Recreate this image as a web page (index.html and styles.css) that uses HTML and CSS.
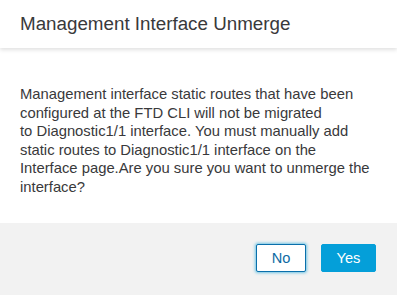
FILE: index.html
```html
<!DOCTYPE html>
<html lang="en">
<head>
    <meta charset="UTF-8">
    <title>Management Interface Unmerge</title>
    <link rel="stylesheet" href="styles.css">
</head>
<body>
    <div class="modal">
        <div class="modal-header">
            <h2 class="modal-title">Management Interface Unmerge</h2>
        </div>
        <div class="modal-body">
            <p>Management interface static routes that have been configured at the FTD CLI will not be migrated to&nbsp;Diagnostic1/1 interface. You must manually add static routes to Diagnostic1/1 interface on the Interface page.Are you sure you want to unmerge the interface?</p>
        </div>
        <div class="modal-footer">
            <button class="btn btn-secondary">No</button>
            <button class="btn btn-primary">Yes</button>
        </div>
    </div>
</body>
</html>
```

FILE: styles.css
```css
body {
    margin: 0;
    font-family: 'Liberation Sans', Arial, sans-serif;
    background-color: #fff;
}

.modal {
    width: 397px;
    height: 295px;
    display: flex;
    flex-direction: column;
}

.modal-header {
    height: 48px;
    padding: 0 20px;
    display: flex;
    align-items: center;
    box-shadow: 0 2px 4px rgba(0, 0, 0, 0.12);
    position: relative;
}

.modal-title {
    margin: 0;
    font-size: 18.8px;
    font-weight: normal;
    color: #39393b;
}

.modal-body {
    flex: 1;
    padding: 37px 22px 0 20px;
}

.modal-body p {
    margin: 0;
    font-size: 14.8px;
    line-height: 18.6px;
    color: #39393b;
}

.modal-footer {
    height: 72px;
    background-color: #f2f2f2;
    display: flex;
    justify-content: flex-end;
    align-items: flex-start;
    gap: 15px;
    padding: 21px 21px 0 0;
    box-sizing: border-box;
}

.btn {
    height: 28px;
    font-family: inherit;
    font-size: 14.6px;
    border-radius: 2px;
    padding: 0;
}

.btn-secondary {
    width: 50px;
    background-color: #fff;
    color: #0d6aa3;
    border: 1px solid #0a6fab;
    box-shadow: 0 0 3px 1px rgba(4, 159, 217, 0.55);
}

.btn-primary {
    width: 55px;
    background-color: #049fd9;
    color: #fff;
    border: 1px solid #049fd9;
}
```
